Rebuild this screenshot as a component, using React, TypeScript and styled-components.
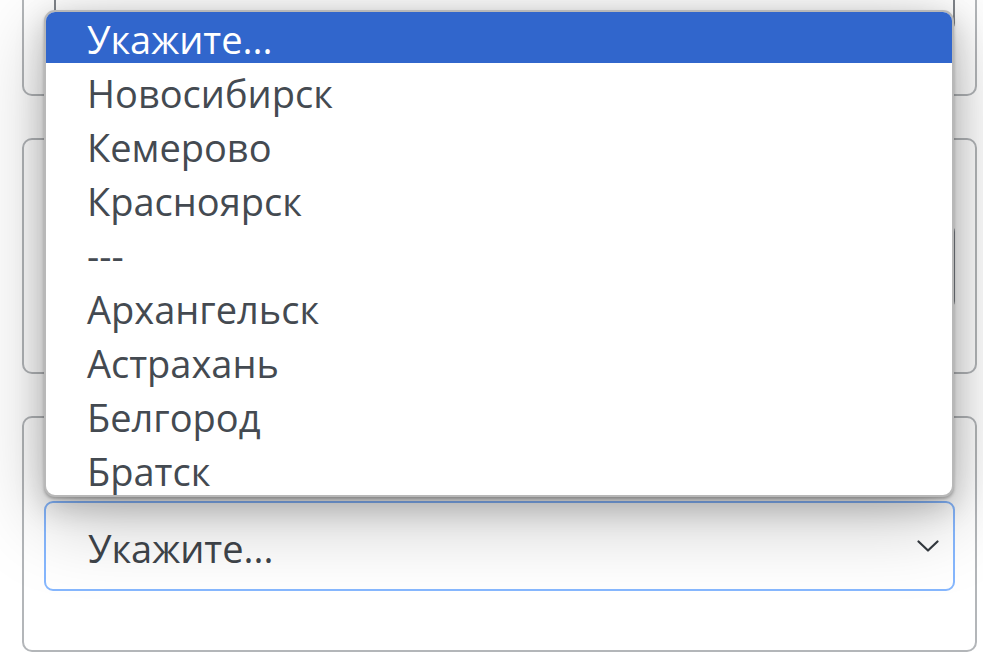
import React from "react"
import styled, { createGlobalStyle } from "styled-components"

const GlobalStyle = createGlobalStyle`
  html, body {
    margin: 0;
    padding: 0;
    background: #ffffff;
    overflow: hidden;
  }
  body {
    font-family: "Open Sans", "Noto Sans", "Liberation Sans", sans-serif;
  }
`

const cities = ["Новосибирск", "Кемерово", "Красноярск", "---", "Архангельск", "Астрахань", "Белгород", "Братск"]

const Chevron = () => (
  <svg width="22" height="12" viewBox="0 0 22 12" fill="none">
    <path d="M1.5 1.5 L11 10.5 L20.5 1.5" stroke="#343a40" strokeWidth="2.2" strokeLinecap="round" strokeLinejoin="round" />
  </svg>
)

export default function App() {
  return (
    <>
      <GlobalStyle />
      <S.Page>
        <S.Card>
          <S.Field $inset={30} />
        </S.Card>
        <S.Card>
          <S.Field $inset={21} />
        </S.Card>
        <S.Card>
          <S.Select>
            <S.SelectText>Укажите...</S.SelectText>
            <Chevron />
          </S.Select>
        </S.Card>

        {/* open native option list of the last select */}
        <S.Listbox>
          <S.Option $selected>Укажите...</S.Option>
          {cities.map((c) => (
            <S.Option key={c}>{c}</S.Option>
          ))}
        </S.Listbox>
      </S.Page>
    </>
  )
}

const S = {
  Page: styled.div`
    position: relative;
    display: flex;
    flex-direction: column;
    gap: 42px;
    padding: 0 6px 40px 22px;
    margin-top: -140px;
  `,
  Card: styled.div`
    flex: none;
    height: 236px;
    box-sizing: border-box;
    border: 2px solid #b3b6b9;
    border-radius: 10px;
    background: #ffffff;
    padding: 83px 20px 0 20px;
  `,
  Field: styled.div<{ $inset: number }>`
    box-sizing: border-box;
    height: 87px;
    margin-left: ${({ $inset }) => $inset - 20}px;
    border: 2px solid #80858b;
    border-radius: 9px;
    background: #ffffff;
  `,
  Select: styled.div`
    box-sizing: border-box;
    height: 90px;
    display: flex;
    align-items: center;
    justify-content: space-between;
    padding: 0 14px 0 42px;
    border: 2px solid #86b7fe;
    border-radius: 9px;
    background: #ffffff;
  `,
  SelectText: styled.span`
    font-size: 38px;
    color: #3f454b;
    line-height: 1;
    padding-top: 4px;
  `,
  Listbox: styled.div`
    position: absolute;
    top: 150px;
    left: 44px;
    width: 910px;
    height: 487px;
    box-sizing: border-box;
    display: flex;
    flex-direction: column;
    background: #ffffff;
    border: 2px solid #b8b8b8;
    border-radius: 11px;
    overflow: hidden;
    box-shadow: 0 2px 3px rgba(0, 0, 0, 0.25), 0 10px 30px rgba(0, 0, 0, 0.2), 0 20px 80px rgba(0, 0, 0, 0.25);
  `,
  Option: styled.div<{ $selected?: boolean }>`
    flex: none;
    height: ${({ $selected }) => ($selected ? "51px" : "54px")};
    line-height: 54px;
    margin-bottom: ${({ $selected }) => ($selected ? "3px" : "0")};
    padding-left: 41px;
    font-size: 38px;
    white-space: nowrap;
    color: ${({ $selected }) => ($selected ? "#ffffff" : "#444a51")};
    background: ${({ $selected }) => ($selected ? "#3166cc" : "transparent")};
  `,
}
